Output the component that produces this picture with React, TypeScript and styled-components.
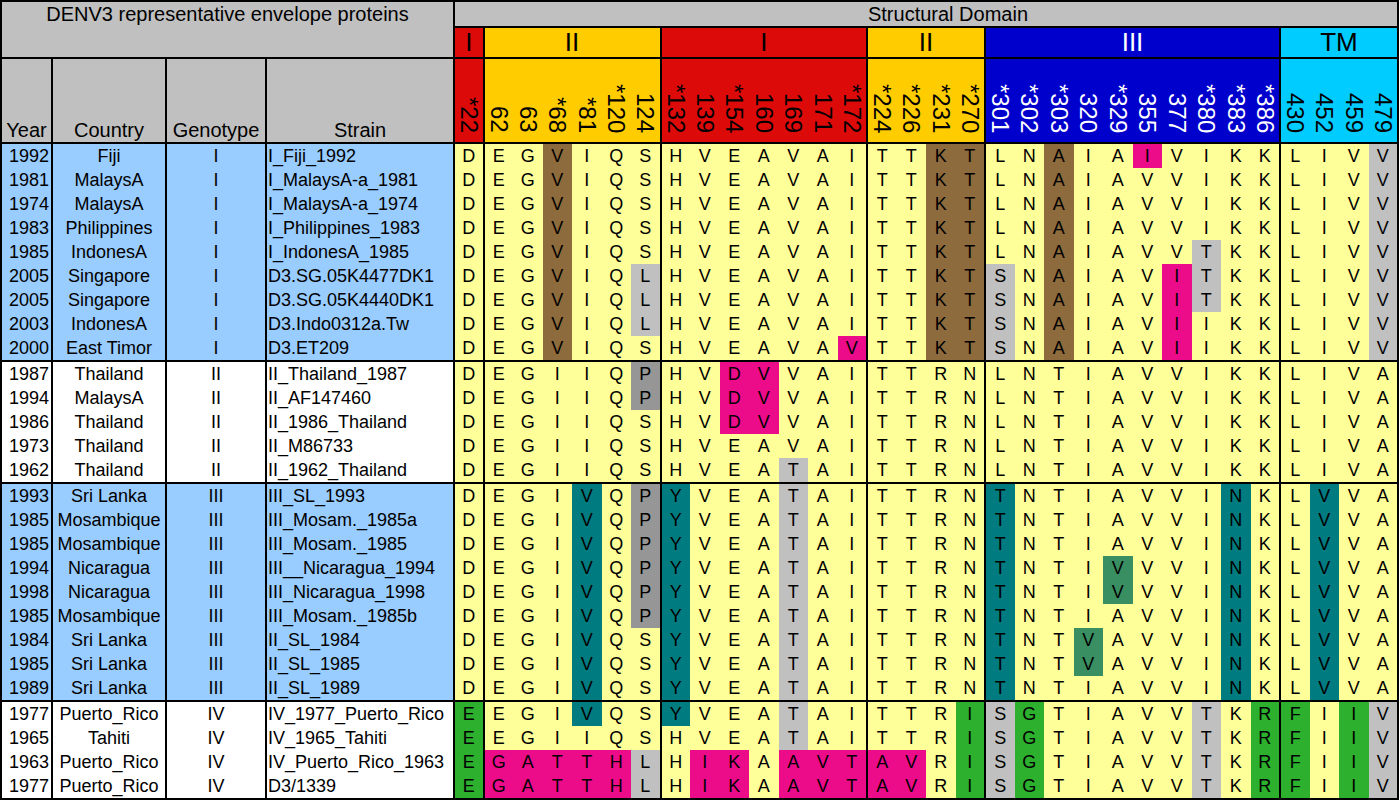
import React from 'react';
import styled, { createGlobalStyle } from 'styled-components';

const GlobalStyle = createGlobalStyle`
  html, body {
    margin: 0;
    padding: 0;
    background: #ffffff;
  }
  body {
    font-family: "Liberation Sans", Arial, sans-serif;
  }
`;

const COLORS: Record<string, string> = {
  b: '#8e6b3c',
  m: '#ec0c8a',
  g: '#c0c0c0',
  d: '#969696',
  t: '#007b7f',
  s: '#3a8f62',
  G: '#2db02d',
};

const DOMAINS = [
  { label: 'I', span: 1, bg: '#dd0a0a', fg: '#000' },
  { label: 'II', span: 6, bg: '#ffcc00', fg: '#000' },
  { label: 'I', span: 7, bg: '#dd0a0a', fg: '#000' },
  { label: 'II', span: 4, bg: '#ffcc00', fg: '#000' },
  { label: 'III', span: 10, bg: '#0000cc', fg: '#fff' },
  { label: 'TM', span: 4, bg: '#00ccff', fg: '#000' },
];

const POSITIONS = [
  '*22', '62', '63', '*68', '*81', '*120', '124',
  '*132', '139', '*154', '160', '169', '171', '*172',
  '*224', '*226', '*231', '*270',
  '*301', '*302', '*303', '320', '*329', '355', '377', '*380', '*383', '*386',
  '430', '452', '459', '479',
];

// last column index of each domain block gets a black rule on its right
const EDGES = [0, 6, 13, 17, 27];

const domainOf = (i: number) => {
  let acc = 0;
  for (const d of DOMAINS) {
    acc += d.span;
    if (i < acc) return d;
  }
  return DOMAINS[DOMAINS.length - 1];
};

const marks = (spec: string): Record<number, string> => {
  const out: Record<number, string> = {};
  spec.split(' ').filter(Boolean).forEach((p) => {
    out[parseInt(p, 10)] = p.replace(/[0-9]/g, '');
  });
  return out;
};

type Strain = [string, string, string, string, string, string];

const g3 = '4t 7t 11g 18t 26t 29t';
const g4 = '0G 17G 18g 19G 25g 27G 28G 30G 31g';

const GROUPS: { blue: boolean; rows: Strain[] }[] = [
  {
    blue: true,
    rows: [
      ['1992', 'Fiji', 'I', 'I_Fiji_1992', 'DEGVIQSHVEAVAITTKTLNAIAIVIKKLIVV', '3b 16b 17b 20b 23m 31g'],
      ['1981', 'MalaysA', 'I', 'I_MalaysA-a_1981', 'DEGVIQSHVEAVAITTKTLNAIAVVIKKLIVV', '3b 16b 17b 20b 31g'],
      ['1974', 'MalaysA', 'I', 'I_MalaysA-a_1974', 'DEGVIQSHVEAVAITTKTLNAIAVVIKKLIVV', '3b 16b 17b 20b 31g'],
      ['1983', 'Philippines', 'I', 'I_Philippines_1983', 'DEGVIQSHVEAVAITTKTLNAIAVVIKKLIVV', '3b 16b 17b 20b 31g'],
      ['1985', 'IndonesA', 'I', 'I_IndonesA_1985', 'DEGVIQSHVEAVAITTKTLNAIAVVTKKLIVV', '3b 16b 17b 20b 25g 31g'],
      ['2005', 'Singapore', 'I', 'D3.SG.05K4477DK1', 'DEGVIQLHVEAVAITTKTSNAIAVITKKLIVV', '3b 6g 16b 17b 18g 20b 24m 25g 31g'],
      ['2005', 'Singapore', 'I', 'D3.SG.05K4440DK1', 'DEGVIQLHVEAVAITTKTSNAIAVITKKLIVV', '3b 6g 16b 17b 18g 20b 24m 25g 31g'],
      ['2003', 'IndonesA', 'I', 'D3.Indo0312a.Tw', 'DEGVIQLHVEAVAITTKTSNAIAVIIKKLIVV', '3b 6g 16b 17b 18g 20b 24m 31g'],
      ['2000', 'East Timor', 'I', 'D3.ET209', 'DEGVIQSHVEAVAVTTKTSNAIAVIIKKLIVV', '3b 13m 16b 17b 18g 20b 24m 31g'],
    ],
  },
  {
    blue: false,
    rows: [
      ['1987', 'Thailand', 'II', 'II_Thailand_1987', 'DEGIIQPHVDVVAITTRNLNTIAVVIKKLIVA', '6d 9m 10m'],
      ['1994', 'MalaysA', 'II', 'II_AF147460', 'DEGIIQPHVDVVAITTRNLNTIAVVIKKLIVA', '6d 9m 10m'],
      ['1986', 'Thailand', 'II', 'II_1986_Thailand', 'DEGIIQSHVDVVAITTRNLNTIAVVIKKLIVA', '9m 10m'],
      ['1973', 'Thailand', 'II', 'II_M86733', 'DEGIIQSHVEAVAITTRNLNTIAVVIKKLIVA', ''],
      ['1962', 'Thailand', 'II', 'II_1962_Thailand', 'DEGIIQSHVEATAITTRNLNTIAVVIKKLIVA', '11g'],
    ],
  },
  {
    blue: true,
    rows: [
      ['1993', 'Sri Lanka', 'III', 'III_SL_1993', 'DEGIVQPYVEATAITTRNTNTIAVVINKLVVA', `${g3} 6d`],
      ['1985', 'Mosambique', 'III', 'III_Mosam._1985a', 'DEGIVQPYVEATAITTRNTNTIAVVINKLVVA', `${g3} 6d`],
      ['1985', 'Mosambique', 'III', 'III_Mosam._1985', 'DEGIVQPYVEATAITTRNTNTIAVVINKLVVA', `${g3} 6d`],
      ['1994', 'Nicaragua', 'III', 'III__Nicaragua_1994', 'DEGIVQPYVEATAITTRNTNTIVVVINKLVVA', `${g3} 6d 22s`],
      ['1998', 'Nicaragua', 'III', 'III_Nicaragua_1998', 'DEGIVQPYVEATAITTRNTNTIVVVINKLVVA', `${g3} 6d 22s`],
      ['1985', 'Mosambique', 'III', 'III_Mosam._1985b', 'DEGIVQPYVEATAITTRNTNTIAVVINKLVVA', `${g3} 6d`],
      ['1984', 'Sri Lanka', 'III', 'II_SL_1984', 'DEGIVQSYVEATAITTRNTNTVAVVINKLVVA', `${g3} 21s`],
      ['1985', 'Sri Lanka', 'III', 'II_SL_1985', 'DEGIVQSYVEATAITTRNTNTVAVVINKLVVA', `${g3} 21s`],
      ['1989', 'Sri Lanka', 'III', 'II_SL_1989', 'DEGIVQSYVEATAITTRNTNTIAVVINKLVVA', g3],
    ],
  },
  {
    blue: false,
    rows: [
      ['1977', 'Puerto_Rico', 'IV', 'IV_1977_Puerto_Rico', 'EEGIVQSYVEATAITTRISGTIAVVTKRFIIV', `${g4} 4t 7t 11g`],
      ['1965', 'Tahiti', 'IV', 'IV_1965_Tahiti', 'EEGIIQSHVEATAITTRISGTIAVVTKRFIIV', `${g4} 11g`],
      ['1963', 'Puerto_Rico', 'IV', 'IV_Puerto_Rico_1963', 'EGATTHLHIKAAVTAVRISGTIAVVTKRFIIV', `${g4} 1m 2m 3m 4m 5m 6g 8m 9m 11m 12m 13m 14m 15m`],
      ['1977', 'Puerto_Rico', 'IV', 'D3/1339', 'EGATTHLHIKAAVTAVRISGTIAVVTKRFIIV', `${g4} 1m 2m 3m 4m 5m 6g 8m 9m 11m 12m 13m 14m 15m`],
    ],
  },
];

const Sheet = styled.table`
  width: 1399px;
  table-layout: fixed;
  border-collapse: collapse;
  font-family: "Liberation Sans", Arial, sans-serif;
  font-size: 18px;
  color: #000;
  border: 2px solid #000;
`;

const Col = styled.col<{ $w: number }>`
  width: ${(p) => p.$w}px;
`;

const GrayHead = styled.th<{ $align?: string; $pad?: number }>`
  background: #c0c0c0;
  border: 2px solid #000;
  font-weight: normal;
  font-size: 20px;
  padding: 0 0 0 ${(p) => p.$pad || 0}px;
  text-align: ${(p) => p.$align || 'center'};
  white-space: nowrap;
`;

const TitleCell = styled(GrayHead)`
  vertical-align: top;
  padding-top: 1px;
  line-height: 22px;
`;

const BandCell = styled(GrayHead)`
  height: 24px;
  line-height: 22px;
  vertical-align: middle;
`;

const ColumnHead = styled(GrayHead)`
  vertical-align: bottom;
  height: 82px;
  line-height: 22px;
  padding-bottom: 1px;
`;

const DomainCell = styled.th<{ $bg: string; $fg: string }>`
  background: ${(p) => p.$bg};
  color: ${(p) => p.$fg};
  border: 2px solid #000;
  font-weight: normal;
  font-size: 26px;
  height: 29px;
  line-height: 29px;
  padding: 0;
  text-align: center;
`;

const NumberCell = styled.th<{ $bg: string; $fg: string }>`
  background: ${(p) => p.$bg};
  color: ${(p) => p.$fg};
  border: 2px solid #000;
  border-left: none;
  border-right: none;
  font-weight: normal;
  font-size: 24px;
  padding: 0 0 3px;
  text-align: center;
  vertical-align: bottom;
  &[data-edge='true'] {
    border-right: 2px solid #000;
  }
`;

const Vertical = styled.span`
  display: inline-block;
  writing-mode: vertical-rl;
  line-height: 26px;
  white-space: nowrap;
`;

const DataRow = styled.tr<{ $first: boolean }>`
  td {
    border-top: ${(p) => (p.$first ? '2px solid #000' : 'none')};
  }
`;

const InfoCell = styled.td<{ $blue: boolean; $align: string }>`
  background: ${(p) => (p.$blue ? '#99ccff' : '#ffffff')};
  border-right: 2px solid #000;
  height: 24px;
  line-height: 24px;
  padding: 0 ${(p) => (p.$align === 'right' ? 2 : 0)}px 0 ${(p) => (p.$align === 'left' ? 1 : 0)}px;
  text-align: ${(p) => p.$align};
  white-space: nowrap;
  overflow: hidden;
`;

const Residue = styled.td<{ $hl?: string; $edge: boolean }>`
  background: ${(p) => (p.$hl ? COLORS[p.$hl] : '#ffff99')};
  border-right: ${(p) => (p.$edge ? '2px solid #000' : 'none')};
  height: 24px;
  line-height: 24px;
  padding: 0;
  text-align: center;
`;

export default function App() {
  return (
    <>
      <GlobalStyle />
      <Sheet>
        <colgroup>
          <Col $w={51} />
          <Col $w={114} />
          <Col $w={100} />
          <Col $w={188} />
          {POSITIONS.map((p) => (
            <col key={p} />
          ))}
        </colgroup>
        <thead>
          <tr>
            <TitleCell colSpan={4} rowSpan={2}>
              DENV3 representative envelope proteins
            </TitleCell>
            <BandCell colSpan={32} $pad={44}>
              Structural Domain
            </BandCell>
          </tr>
          <tr>
            {DOMAINS.map((d, i) => (
              <DomainCell key={i} colSpan={d.span} $bg={d.bg} $fg={d.fg}>
                {d.label}
              </DomainCell>
            ))}
          </tr>
          <tr>
            <ColumnHead>Year</ColumnHead>
            <ColumnHead>Country</ColumnHead>
            <ColumnHead>Genotype</ColumnHead>
            <ColumnHead>Strain</ColumnHead>
            {POSITIONS.map((p, i) => {
              const d = domainOf(i);
              return (
                <NumberCell
                  key={p}
                  $bg={d.bg}
                  $fg={d.fg}
                  data-edge={EDGES.includes(i) ? 'true' : 'false'}
                >
                  <Vertical>{p}</Vertical>
                </NumberCell>
              );
            })}
          </tr>
        </thead>
        <tbody>
          {GROUPS.map((group, gi) =>
            group.rows.map((row, ri) => {
              const [year, country, geno, strain, seq, spec] = row;
              const hl = marks(spec);
              return (
                <DataRow key={`${gi}-${ri}`} $first={ri === 0}>
                  <InfoCell $blue={group.blue} $align="right">{year}</InfoCell>
                  <InfoCell $blue={group.blue} $align="center">{country}</InfoCell>
                  <InfoCell $blue={group.blue} $align="center">{geno}</InfoCell>
                  <InfoCell $blue={group.blue} $align="left">{strain}</InfoCell>
                  {seq.split('').map((aa, i) => (
                    <Residue key={i} $hl={hl[i]} $edge={EDGES.includes(i)}>
                      {aa}
                    </Residue>
                  ))}
                </DataRow>
              );
            })
          )}
        </tbody>
      </Sheet>
    </>
  );
}
